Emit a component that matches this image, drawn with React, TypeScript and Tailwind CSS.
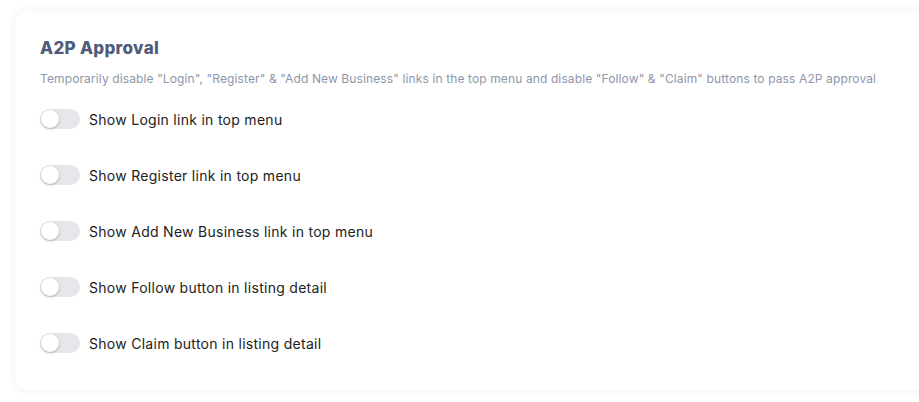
import React, { useState } from "react";

// A2P approval settings card

const options = [
  "Show Login link in top menu",
  "Show Register link in top menu",
  "Show Add New Business link in top menu",
  "Show Follow button in listing detail",
  "Show Claim button in listing detail",
];

function Toggle({ on, onChange }: { on: boolean; onChange: () => void }) {
  return (
    <button
      type="button"
      onClick={onChange}
      className={`relative h-5 w-10 shrink-0 rounded-full transition-colors ${
        on ? "bg-[#4f5d7e]" : "bg-[#e5e7eb]"
      }`}
    >
      <span
        className={`absolute top-[1px] h-[18px] w-[18px] rounded-full bg-white shadow-[0_1px_3px_rgba(0,0,0,0.25)] transition-all ${
          on ? "left-[21px]" : "left-[1px]"
        }`}
      />
    </button>
  );
}

export default function App() {
  const [values, setValues] = useState<boolean[]>(options.map(() => false));

  const flip = (i: number) =>
    setValues((v) => v.map((x, j) => (j === i ? !x : x)));

  return (
    <div
      className="min-h-[402px] w-[919px] overflow-hidden bg-white pl-[15px] pt-[11px]"
      style={{ fontFamily: "Inter, 'Open Sans', sans-serif" }}
    >
      <div className="w-[930px] rounded-xl bg-white pb-[37px] pl-[25px] pt-[27px] shadow-[0_0_10px_rgba(0,0,0,0.07)]">
        <h2 className="text-[17px] font-extrabold leading-[20px] tracking-[0.3px] text-[#4f5b7a]">
          A2P Approval
        </h2>
        <p className="mt-[14px] text-[12px] leading-[14px] tracking-[0.12px] text-[#8e96aa]">
          Temporarily disable "Login", "Register" &amp; "Add New Business" links
          in the top menu and disable "Follow" &amp; "Claim" buttons to pass A2P
          approval
        </p>
        <div className="mt-[23px] flex flex-col gap-[36px]">
          {options.map((label, i) => (
            <label key={label} className="flex h-5 items-center gap-[9px]">
              <Toggle on={values[i]} onChange={() => flip(i)} />
              <span className="text-[14px] tracking-[0.28px] text-[#222]">
                {label}
              </span>
            </label>
          ))}
        </div>
      </div>
    </div>
  );
}
